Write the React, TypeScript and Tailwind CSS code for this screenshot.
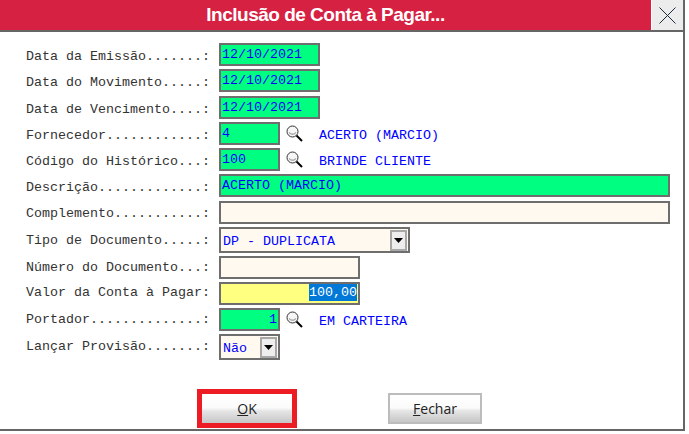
const mono = "font-['Liberation_Mono','Courier_New',monospace] text-[13.33px]";

function Lupa() {
  return (
    <svg width="17" height="18" viewBox="0 0 17 18" className="ml-[6px] mt-[3px] shrink-0">
      <circle cx="6.5" cy="6.5" r="5.5" fill="#f6f6f6" stroke="#333" strokeWidth="1" />
      <path d="M3 7.5 Q6.5 11 10 7.5" fill="none" stroke="#aaa" strokeWidth="1.2" />
      <path d="M10.5 10.5 L16 16" stroke="#000" strokeWidth="2" />
    </svg>
  );
}

function Campo({ value, className, right }: { value?: string; className: string; right?: boolean }) {
  return (
    <div
      className={`h-[23px] border-2 border-[#6e6e6e] px-[1px] leading-[19px] text-[#0000ff] ${right ? "text-right" : ""} ${className}`}
    >
      {value}
    </div>
  );
}

function Combo({ value, className }: { value: string; className: string }) {
  return (
    <div className={`flex h-[26px] items-center justify-between border-2 border-[#6e6e6e] bg-[#fff9ef] pl-[2px] pr-[1px] text-[#0000ff] ${className}`}>
      <span className="pt-[2px] leading-[19px]">{value}</span>
      <div className="flex h-[21px] w-[17px] items-center justify-center border-2 border-[#a8a8a8] bg-[#eeeeee]">
        <svg width="9" height="5" viewBox="0 0 9 5">
          <path d="M0 0 H9 L4.5 5 Z" fill="#000" />
        </svg>
      </div>
    </div>
  );
}

function Linha({
  label,
  className,
  labelClass = "pt-[4px]",
  children,
}: {
  label: string;
  className: string;
  labelClass?: string;
  children: React.ReactNode;
}) {
  return (
    <div className={`flex items-start ${className}`}>
      <span className={`w-[193px] shrink-0 whitespace-pre leading-[19px] text-[#333] ${labelClass}`}>{label}</span>
      {children}
    </div>
  );
}

function Descricao({ text }: { text: string }) {
  return <span className="ml-[16px] pt-[4px] leading-[19px] text-[#0000ff]">{text}</span>;
}

function Botao({ children, className }: { children: React.ReactNode; className: string }) {
  return (
    <button
      className={`bg-[linear-gradient(#ffffff_0%,#fbfbfb_48%,#e6e6e6_58%,#c6c6c6_100%)] font-['Open_Sans',sans-serif] text-[14px] text-[#222] ${className}`}
    >
      {children}
    </button>
  );
}

export default function App() {
  return (
    <div className="h-[434px] w-[689px] bg-white">
      <div className={`flex h-[431px] w-[685px] flex-col border-r-2 border-b-2 border-[#666] bg-white ${mono}`}>
        <header className="flex h-[32px] shrink-0 border-b-2 border-[#666]">
          <div className="flex flex-1 items-center justify-center bg-[#d62142] font-['Liberation_Sans',Arial,sans-serif] text-[19px] font-bold tracking-[-0.5px] text-white">
            Inclusão de Conta à Pagar...
          </div>
          <div className="ml-[1px] flex w-[31px] items-center justify-center bg-[#ececec]">
            <svg width="17" height="17" viewBox="0 0 17 17">
              <path d="M0.5 0.5 L16.5 16.5 M16.5 0.5 L0.5 16.5" stroke="#1c2a40" strokeWidth="1" />
            </svg>
          </div>
        </header>

        <div className="mt-[11px] flex flex-col pl-[26px]">
          <Linha label="Data da Emissão.......:" className="">
            <Campo value="12/10/2021" className="w-[101px] bg-[#00ff80]" />
          </Linha>
          <Linha label="Data do Movimento.....:" className="mt-[3px]">
            <Campo value="12/10/2021" className="w-[101px] bg-[#00ff80]" />
          </Linha>
          <Linha label="Data de Vencimento....:" className="mt-[4px]">
            <Campo value="12/10/2021" className="w-[101px] bg-[#00ff80]" />
          </Linha>
          <Linha label="Fornecedor............:" className="mt-[3px]">
            <Campo value="4" className="w-[61px] bg-[#00ff80]" />
            <Lupa />
            <Descricao text="ACERTO (MARCIO)" />
          </Linha>
          <Linha label="Código do Histórico...:" className="mt-[3px]">
            <Campo value="100" className="w-[61px] bg-[#00ff80]" />
            <Lupa />
            <Descricao text="BRINDE CLIENTE" />
          </Linha>
          <Linha label="Descrição.............:" className="mt-[3px]">
            <Campo value="ACERTO (MARCIO)" className="w-[451px] bg-[#00ff80]" />
          </Linha>
          <Linha label="Complemento...........:" labelClass="pt-[3px]" className="mt-[4px]">
            <Campo className="w-[451px] bg-[#fff9ef]" />
          </Linha>
          <Linha label="Tipo de Documento.....:" className="mt-[3px]">
            <Combo value="DP - DUPLICATA" className="w-[191px]" />
          </Linha>
          <Linha label="Número do Documento...:" labelClass="pt-[2px]" className="mt-[3px]">
            <Campo className="w-[141px] bg-[#fff9ef]" />
          </Linha>
          <Linha label="Valor da Conta à Pagar:" labelClass="pt-[1px]" className="mt-[3px]">
            <div className="flex h-[23px] w-[141px] justify-end border-2 border-[#6e6e6e] bg-[#ffff80] pr-[1px]">
              <span className="h-[17px] bg-[#0078d7] leading-[17px] text-white">100,00</span>
            </div>
          </Linha>
          <Linha label="Portador..............:" labelClass="pt-[2px]" className="mt-[3px]">
            <Campo value="1" right className="w-[61px] bg-[#00ff80]" />
            <Lupa />
            <Descricao text="EM CARTEIRA" />
          </Linha>
          <Linha label="Lançar Provisão.......:" labelClass="pt-[3px]" className="mt-[3px]">
            <Combo value="Não" className="w-[61px]" />
          </Linha>
        </div>

        <div className="mt-[29px] flex items-start pl-[197px]">
          <Botao className="h-[39px] w-[100px] border-[5px] border-[#ed1c24]">
            <u>O</u>K
          </Botao>
          <Botao className="ml-[91px] mt-[4px] h-[31px] w-[94px] border-2 border-[#bcbcbc]">
            <u>F</u>echar
          </Botao>
        </div>
      </div>
    </div>
  );
}
